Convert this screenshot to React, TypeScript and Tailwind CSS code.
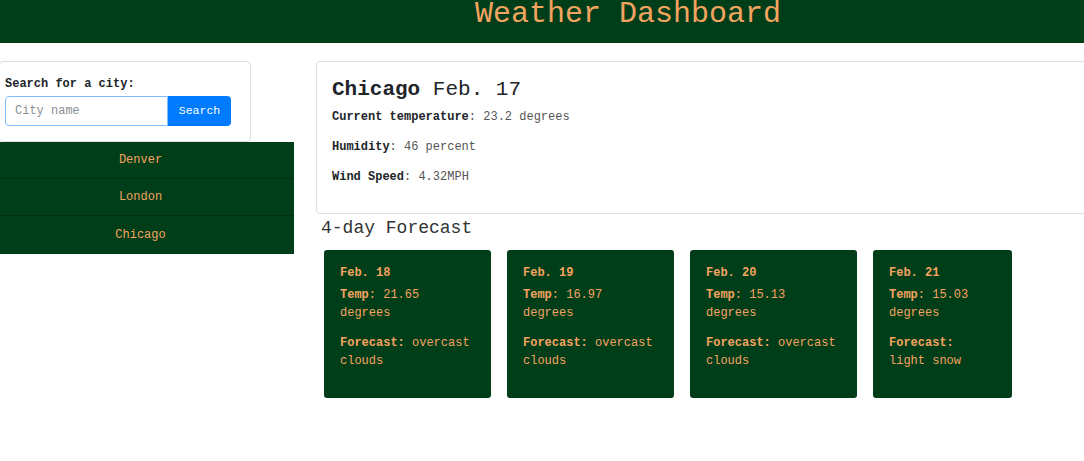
const cities = ['Denver', 'London', 'Chicago']

const forecast = [
  { date: 'Feb. 18', temp: '21.65', desc: 'overcast clouds', w: 'w-[167px]' },
  { date: 'Feb. 19', temp: '16.97', desc: 'overcast clouds', w: 'w-[167px]' },
  { date: 'Feb. 20', temp: '15.13', desc: 'overcast clouds', w: 'w-[167px]' },
  { date: 'Feb. 21', temp: '15.03', desc: 'light snow', w: 'w-[139px]' },
]

export default function App() {
  return (
    <div className="min-h-[461px] bg-white text-[#212529] font-['Liberation_Mono','Courier_New',monospace] overflow-hidden">
      {/* Header */}
      <header className="h-[43px] bg-[#003d19] pl-[172px] flex justify-center items-start">
        <h1 className="text-[30px] leading-[30px] -mt-[1px] text-[#f4a460]">Weather Dashboard</h1>
      </header>

      <div className="flex pt-[18px]">
        {/* Left column */}
        <aside className="w-[294px] shrink-0">
          <div className="w-[252px] h-[81px] -ml-[1px] border border-[#dfdfdf] rounded-[4px] pl-[5px] pt-[14px]">
            <label className="block text-[12px] leading-[16px] font-bold text-[#212529]">Search for a city:</label>
            <div className="flex mt-[4px]">
              <input
                type="text"
                placeholder="City name"
                className="w-[163px] h-[30px] border border-[#80bdff] rounded-l-[4px] px-[9px] text-[12px] placeholder:text-[#8a8f94] outline-none"
              />
              <button
                type="button"
                className="w-[63px] h-[30px] bg-[#007bff] text-white text-[11.5px] rounded-r-[4px]"
              >
                Search
              </button>
            </div>
          </div>
          <ul className="w-[294px]">
            {cities.map((c, i) => (
              <li
                key={c}
                className={`h-[37px] flex items-center justify-center pr-[13px] bg-[#003d19] text-[#f4a460] text-[12px] ${
                  i < cities.length - 1 ? 'border-b border-[#002d12]' : 'h-[38px]'
                }`}
              >
                {c}
              </li>
            ))}
          </ul>
        </aside>

        {/* Right column */}
        <main className="flex-1 pl-[22px]">
          <section className="w-[800px] h-[153px] border border-[#dfdfdf] rounded-[4px] pl-[15px] pt-[14px]">
            <h2 className="text-[21px] leading-[28px]">
              <span className="font-bold">Chicago</span> Feb. 17
            </h2>
            <p className="text-[12px] leading-[16px] mt-[5px] text-[#555]"><b className="text-[#212529]">Current temperature</b>: 23.2 degrees</p>
            <p className="text-[12px] leading-[16px] mt-[14px] text-[#555]"><b className="text-[#212529]">Humidity</b>: 46 percent</p>
            <p className="text-[12px] leading-[16px] mt-[14px] text-[#555]"><b className="text-[#212529]">Wind Speed</b>: 4.32MPH</p>
          </section>

          <h3 className="text-[18px] leading-[24px] ml-[5px] mt-[2px] text-[#333]">4-day Forecast</h3>

          <div className="flex gap-[16px] ml-[8px] mt-[10px]">
            {forecast.map((f) => (
              <div
                key={f.date}
                className={`${f.w} h-[148px] bg-[#003d19] rounded-[3px] px-[16px] pt-[14px] text-[#f4a460] text-[12px] leading-[18px]`}
              >
                <p className="font-bold">{f.date}</p>
                <p className="mt-[4px]"><b>Temp</b>: {f.temp} degrees</p>
                <p className="mt-[12px]"><b>Forecast:</b> {f.desc}</p>
              </div>
            ))}
          </div>
        </main>
      </div>
    </div>
  )
}
